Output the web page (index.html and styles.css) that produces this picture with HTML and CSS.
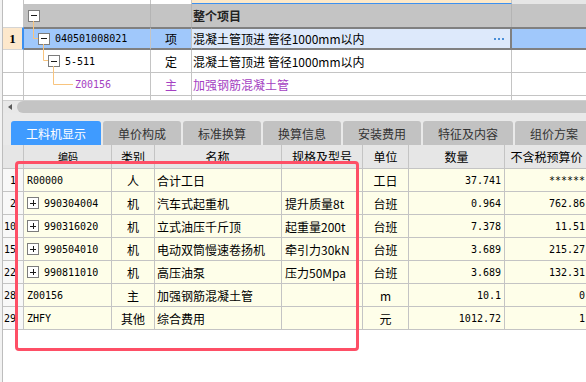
FILE: index.html
```html
<!DOCTYPE html>
<html lang="zh-CN">

<head>
    <meta charset="UTF-8">
    <title>工料机显示</title>
    <link rel="stylesheet" href="styles.css">
</head>

<body>
    <div class="app">
        <!-- 清单树 -->
        <div class="tree">
            <svg class="tree-lines" width="200" height="100" viewBox="0 0 200 100">
                <path d="M30.5 21 V38.5 H35 M40.5 44 V60.5 H45 M50.5 66 V84.5 H70" fill="none" stroke="#f8c47e" stroke-width="1" />
            </svg>
            <div class="row strip">
                <div class="cell t-rh"></div>
                <div class="cell t-code"></div>
                <div class="cell t-type"></div>
                <div class="cell t-name"></div>
                <div class="cell t-more"></div>
            </div>
            <div class="row group">
                <div class="cell t-rh"></div>
                <div class="cell t-code lv0"><span class="tg minus"></span></div>
                <div class="cell t-type"></div>
                <div class="cell t-name"><b>整个项目</b></div>
                <div class="cell t-more"></div>
            </div>
            <div class="row sel">
                <div class="cell t-rh">1</div>
                <div class="cell t-code lv1"><span class="tg minus"></span>040501008021</div>
                <div class="cell t-type">项</div>
                <div class="cell t-name">混凝土管顶进 管径1000mm以内<span class="dots"></span></div>
                <div class="cell t-more"></div>
            </div>
            <div class="row">
                <div class="cell t-rh"></div>
                <div class="cell t-code lv2"><span class="tg minus"></span>5-511</div>
                <div class="cell t-type">定</div>
                <div class="cell t-name">混凝土管顶进 管径1000mm以内</div>
                <div class="cell t-more"></div>
            </div>
            <div class="row main">
                <div class="cell t-rh"></div>
                <div class="cell t-code lv3">Z00156</div>
                <div class="cell t-type">主</div>
                <div class="cell t-name">加强钢筋混凝土管</div>
                <div class="cell t-more"></div>
            </div>
            <div class="row tail">
                <div class="cell t-rh"></div>
                <div class="cell t-code"></div>
                <div class="cell t-type"></div>
                <div class="cell t-name"></div>
                <div class="cell t-more"></div>
            </div>
        </div>

        <!-- 横向滚动条 -->
        <div class="hscroll">
            <span class="arrow"></span>
            <span class="thumb"></span>
        </div>

        <!-- 页签 -->
        <div class="tabs">
            <div class="tab active w-wide">工料机显示</div>
            <div class="tab">单价构成</div>
            <div class="tab">标准换算</div>
            <div class="tab">换算信息</div>
            <div class="tab">安装费用</div>
            <div class="tab w-wide">特征及内容</div>
            <div class="tab">组价方案</div>
        </div>

        <!-- 工料机明细 -->
        <div class="detail">
            <div class="drow head">
                <div class="cell d-rn"></div>
                <div class="cell d-code">编码</div>
                <div class="cell d-type">类别</div>
                <div class="cell d-name">名称</div>
                <div class="cell d-spec">规格及型号</div>
                <div class="cell d-unit">单位</div>
                <div class="cell d-qty">数量</div>
                <div class="cell d-price">不含税预算价</div>
            </div>
            <div class="drow">
                <div class="cell d-rn">1</div>
                <div class="cell d-code">R00000</div>
                <div class="cell d-type">人</div>
                <div class="cell d-name">合计工日</div>
                <div class="cell d-spec"></div>
                <div class="cell d-unit">工日</div>
                <div class="cell d-qty">37.741</div>
                <div class="cell d-price">******</div>
            </div>
            <div class="drow">
                <div class="cell d-rn">2</div>
                <div class="cell d-code"><span class="tg plus"></span>990304004</div>
                <div class="cell d-type">机</div>
                <div class="cell d-name">汽车式起重机</div>
                <div class="cell d-spec">提升质量8t</div>
                <div class="cell d-unit">台班</div>
                <div class="cell d-qty">0.964</div>
                <div class="cell d-price">762.86</div>
            </div>
            <div class="drow">
                <div class="cell d-rn">10</div>
                <div class="cell d-code"><span class="tg plus"></span>990316020</div>
                <div class="cell d-type">机</div>
                <div class="cell d-name">立式油压千斤顶</div>
                <div class="cell d-spec">起重量200t</div>
                <div class="cell d-unit">台班</div>
                <div class="cell d-qty">7.378</div>
                <div class="cell d-price">11.51</div>
            </div>
            <div class="drow">
                <div class="cell d-rn">15</div>
                <div class="cell d-code"><span class="tg plus"></span>990504010</div>
                <div class="cell d-type">机</div>
                <div class="cell d-name">电动双筒慢速卷扬机</div>
                <div class="cell d-spec">牵引力30kN</div>
                <div class="cell d-unit">台班</div>
                <div class="cell d-qty">3.689</div>
                <div class="cell d-price">215.27</div>
            </div>
            <div class="drow">
                <div class="cell d-rn">22</div>
                <div class="cell d-code"><span class="tg plus"></span>990811010</div>
                <div class="cell d-type">机</div>
                <div class="cell d-name">高压油泵</div>
                <div class="cell d-spec">压力50Mpa</div>
                <div class="cell d-unit">台班</div>
                <div class="cell d-qty">3.689</div>
                <div class="cell d-price">132.31</div>
            </div>
            <div class="drow">
                <div class="cell d-rn">28</div>
                <div class="cell d-code">Z00156</div>
                <div class="cell d-type">主</div>
                <div class="cell d-name">加强钢筋混凝土管</div>
                <div class="cell d-spec"></div>
                <div class="cell d-unit">m</div>
                <div class="cell d-qty">10.1</div>
                <div class="cell d-price">0</div>
            </div>
            <div class="drow">
                <div class="cell d-rn">29</div>
                <div class="cell d-code">ZHFY</div>
                <div class="cell d-type">其他</div>
                <div class="cell d-name">综合费用</div>
                <div class="cell d-spec"></div>
                <div class="cell d-unit">元</div>
                <div class="cell d-qty">1012.72</div>
                <div class="cell d-price">1</div>
            </div>
        </div>

        <!-- 红色标注框 -->
        <div class="mark"></div>
    </div>
</body>

</html>
```

FILE: styles.css
```css
/* 基本 */
body {
    margin: 0;
    background: #f2f2f2;
    font-family: "Noto Sans CJK SC", sans-serif;
    font-size: 12px;
    color: #000;
}

.app {
    position: relative;
    width: 583px;
    height: 382px;
    margin-left: 2px;
    border-left: 1px solid #bdbdbd;
    background: #fff;
    overflow: hidden;
}

/* 通用单元格 */
.cell {
    flex: none;
    box-sizing: border-box;
    display: flex;
    align-items: center;
    padding: 0 3px;
    border-right: 1px solid #c4c4c4;
    white-space: nowrap;
    overflow: hidden;
}

/* 树形节点的展开框 */
.tg {
    flex: none;
    box-sizing: border-box;
    width: 12px;
    height: 12px;
    margin-right: 5px;
    border: 1px solid #7c7c7c;
    background: #fff;
}

.tg.minus {
    background: linear-gradient(#1a1a1a, #1a1a1a) center / 6px 1px no-repeat, #fff;
}

.tg.plus {
    background:
        linear-gradient(#1a1a1a, #1a1a1a) center / 6px 1px no-repeat,
        linear-gradient(#1a1a1a, #1a1a1a) center / 1px 6px no-repeat,
        #fff;
}

/* 清单树 */
.tree {
    position: relative;
}

.tree-lines {
    position: absolute;
    left: 0;
    top: 0;
    z-index: 2;
}

.row {
    display: flex;
    height: 23px;
    box-sizing: border-box;
    border-bottom: 1px solid #c4c4c4;
}

.t-rh {
    width: 21px;
    justify-content: center;
}

.t-code {
    width: 127px;
    font-family: "DejaVu Sans Mono", monospace;
    font-size: 10px;
}

.t-type {
    width: 41px;
    justify-content: center;
}

.t-name {
    width: 320px;
    padding-left: 1px;
}

.t-more {
    width: 80px;
}

.lv0 { padding-left: 4px; }
.lv1 { padding-left: 14px; }
.lv2 { padding-left: 24px; }
.lv3 { padding-left: 51px; }

.row.strip {
    height: 4px;
    border-bottom: none;
}

.row.strip .t-name {
    background: #fde9c9;
    border-bottom: 1px solid #3c90f0;
}

.row.strip .t-more {
    background: #e6e6e6;
}

.row.group {
    background: #c4c4c4;
    border-bottom: none;
}

.row.group .cell {
    border-right-color: #b4b4b4;
}

.row.group .t-rh {
    background: #fff;
    border-right-color: #c4c4c4;
}

.row.group b {
    color: #222;
}

.row.sel {
    border-bottom: none;
}

.row.sel .cell {
    background: #a0c8fb;
    border-top: 2px solid #808080;
    border-bottom: 2px solid #808080;
}

.row.sel .t-rh {
    background: #fde8cc;
    border-top: 1px solid #d4d4d4;
    border-bottom: 1px solid #d4d4d4;
    border-right: 2px solid #3c8ff0;
    font-family: "Liberation Serif", serif;
    font-size: 13px;
    font-weight: bold;
}

.row.sel .t-name {
    background: #dde9fb;
    border-right: 2px solid #808080;
    justify-content: space-between;
    padding-right: 6px;
}

.dots {
    width: 10px;
    height: 2px;
    background: repeating-linear-gradient(90deg, #4a8fd8 0 2px, transparent 2px 4px);
}

.row.main {
    color: #a43fc2;
}

.row.tail {
    height: 4px;
    border-bottom: none;
}

/* 横向滚动条 */
.hscroll {
    display: flex;
    align-items: center;
    height: 12px;
    border-top: 1px solid #cfcfcf;
    background: #e8e8e8;
}

.arrow {
    width: 0;
    height: 0;
    margin: 0 5px 0 5px;
    border-top: 3px solid transparent;
    border-bottom: 3px solid transparent;
    border-right: 4px solid #5a5a5a;
}

.thumb {
    flex: 1;
    height: 12px;
    border-radius: 6px 0 0 6px;
    background: #c4c4c4;
}

/* 页签 */
.tabs {
    display: flex;
    gap: 2px;
    padding: 8px 0 0 8px;
    background: #e9e9e9;
}

.tab {
    flex: none;
    width: 78px;
    height: 24px;
    display: flex;
    align-items: center;
    justify-content: center;
    border-radius: 3px 3px 0 0;
    background: #c2c2c2;
    color: #333;
}

.tab.w-wide {
    width: 90px;
}

.tab.active {
    background: #3f9bff;
    color: #fff;
}

/* 工料机明细 */
.drow {
    display: flex;
    height: 23px;
    box-sizing: border-box;
    border-bottom: 1px solid #c4c4c4;
    background: #fefee9;
}

.drow.head {
    height: 24px;
    background: #e6e6e6;
}

.drow.head .cell {
    justify-content: center;
}

.d-rn {
    width: 21px;
    justify-content: flex-end;
    padding-right: 7px;
    background: #f8f8f8;
    font-family: "DejaVu Sans Mono", monospace;
    font-size: 10px;
}

.drow.head .d-rn {
    background: #e6e6e6;
}

.d-code {
    width: 88px;
    font-family: "DejaVu Sans Mono", monospace;
    font-size: 10px;
}

.d-type {
    width: 43px;
    justify-content: center;
}

.d-name {
    width: 127px;
    padding-left: 2px;
}

.d-spec {
    width: 81px;
}

.d-unit {
    width: 46px;
    justify-content: center;
}

.d-qty {
    width: 96px;
    justify-content: flex-end;
    font-family: "DejaVu Sans Mono", monospace;
    font-size: 10px;
}

.d-price {
    width: 84px;
    justify-content: flex-end;
    font-family: "DejaVu Sans Mono", monospace;
    font-size: 10px;
}

.drow.head .d-qty,
.drow.head .d-price {
    font-family: "Noto Sans CJK SC", sans-serif;
    font-size: 12px;
}

/* 红色标注框 */
.mark {
    position: absolute;
    left: 12px;
    top: 161px;
    width: 344px;
    height: 190px;
    box-sizing: border-box;
    border: 3px solid #fe4f66;
    border-radius: 4px;
    z-index: 3;
}
```
